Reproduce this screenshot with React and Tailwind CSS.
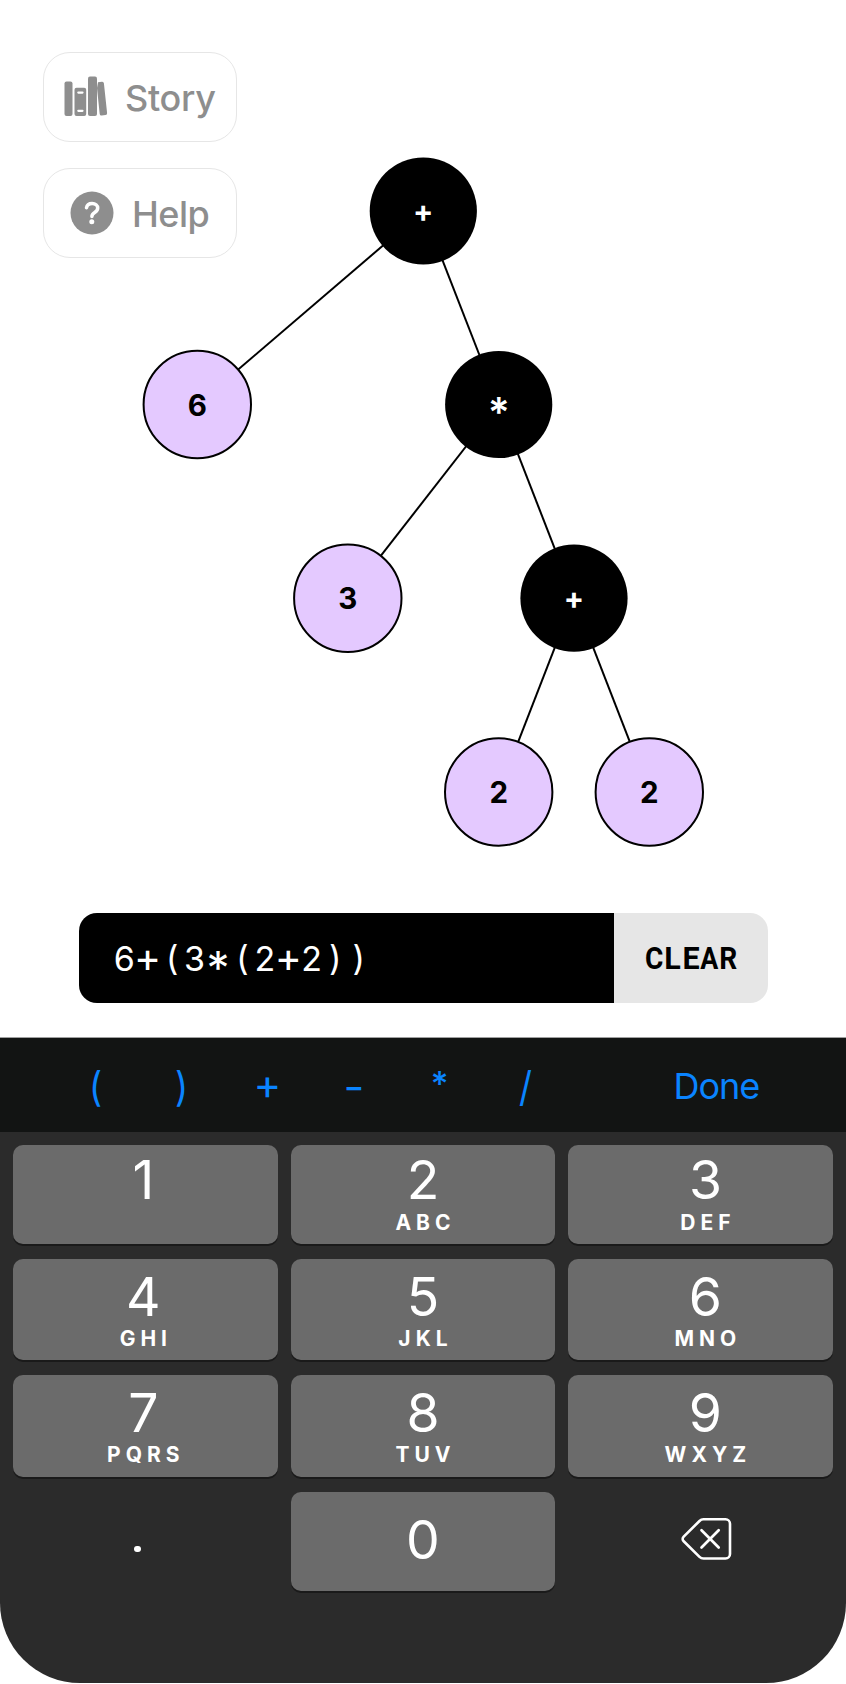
const edges = [
  [423.3, 211, 197.3, 404.5],
  [423.3, 211, 498.7, 404.5],
  [498.7, 404.5, 347.8, 598.2],
  [498.7, 404.5, 574, 598.2],
  [574, 598.2, 498.7, 792],
  [574, 598.2, 649.3, 792],
];

const nodes = [
  { x: 423.3, y: 211, label: "+", op: true, dy: 10.5 },
  { x: 197.3, y: 404.5, label: "6", dy: 11.3 },
  { x: 498.7, y: 404.5, label: "*", op: true, dy: 22.5 },
  { x: 347.8, y: 598.2, label: "3", dy: 11 },
  { x: 574, y: 598.2, label: "+", op: true, dy: 10.5 },
  { x: 498.7, y: 792, label: "2", dy: 10.7 },
  { x: 649.3, y: 792, label: "2", dy: 10.7 },
];

function Tree() {
  return (
    <svg className="absolute left-0 top-0" width="846" height="880" viewBox="0 0 846 880">
      {edges.map(([x1, y1, x2, y2], i) => (
        <line key={i} x1={x1} y1={y1} x2={x2} y2={y2} stroke="#000" strokeWidth="2" />
      ))}
      {nodes.map((n, i) => (
        <g key={i}>
          <circle cx={n.x} cy={n.y} r={n.op ? 53.6 : 53.7} fill={n.op ? "#000" : "#e4c9ff"} stroke="#000" strokeWidth={n.op ? 0 : 2} />
          <text
            x={n.x}
            y={n.y + n.dy}
            textAnchor="middle"
            fontSize={n.label === "*" ? 41 : n.op ? 30 : 29.5}
            fontWeight={n.label === "*" ? 600 : 700}
            fill={n.op ? "#fff" : "#000"}
          >
            {n.label}
          </text>
        </g>
      ))}
    </svg>
  );
}

function BooksIcon() {
  return (
    <svg width="44" height="42" viewBox="0 0 44 42" fill="#8e8e8e">
      <rect x="0.5" y="5.5" width="8" height="34.5" rx="2" />
      <path d="M12.500 11.700h7.700a2 2 0 0 1 2 2V38a2 2 0 0 1-2 2h-7.700a2 2 0 0 1-2-2V13.700a2 2 0 0 1 2-2Z" />
      <rect x="13.200" y="15.500" width="6.400" height="2.200" rx="1.100" fill="#fff" />
      <rect x="13.200" y="33.700" width="6.400" height="2.200" rx="1.100" fill="#fff" />
      <rect x="24" y="0.500" width="9" height="39.500" rx="2" />
      <path d="M34 6.200l3.900-.5a1.800 1.800 0 0 1 2 1.600l3.200 29.700a1.800 1.800 0 0 1-1.600 2l-3.800.5a1.800 1.800 0 0 1-2-1.600L33 12z" />
    </svg>
  );
}

function HelpIcon() {
  return (
    <svg width="44" height="44" viewBox="0 0 44 44" fill="none">
      <circle cx="22" cy="22" r="21.500" fill="#8e8e8e" />
      <path d="M16.500 16.800c.5-2.900 2.600-4.300 5.600-4.300 3.300 0 5.600 1.800 5.600 4.600 0 2.200-1.200 3.300-3 4.400-1.900 1.200-2.800 2-2.800 3.900" stroke="#fff" strokeWidth="3.500" strokeLinecap="round" />
      <circle cx="21.800" cy="30.800" r="2.500" fill="#fff" />
    </svg>
  );
}

function Backspace() {
  return (
    <svg width="52" height="44" viewBox="0 0 52 44" fill="none" stroke="#fff" strokeLinecap="round" strokeLinejoin="round">
      <path strokeWidth="2.600" d="M22.500 2.300H44.500a4.500 4.500 0 0 1 4.500 4.500V37a4.500 4.500 0 0 1-4.500 4.500H22.500c-1.600 0-2.800-.5-4-1.700L2.700 24.200c-1.400-1.400-1.400-3.200 0-4.600L18.500 4c1.200-1.200 2.400-1.700 4-1.700Z" />
      <path strokeWidth="2.700" d="M20.500 13.300l17.200 17.200M37.700 13.300L20.500 30.500" />
    </svg>
  );
}

const shifts = ["pr-[4px]", "pl-[0px]", "pl-[9.500px]"];

function Key({ digit, letters, col, top }) {
  return (
    <div className={`flex flex-col items-center rounded-[10px] bg-[#6b6b6b] text-white shadow-[0_2px_0_#1a1a1a] ${shifts[col]} ${top}`}>
      <span className="text-[53.5px] font-[380] leading-[54px]">{digit}</span>
      {letters && (
        <span className="mt-[3.500px] pl-[5px] text-[21px] font-[650] leading-[24px] tracking-[5px]">{letters}</span>
      )}
    </div>
  );
}

const rows = [
  [["1"], ["2", "ABC"], ["3", "DEF"]],
  [["4", "GHI"], ["5", "JKL"], ["6", "MNO"]],
  [["7", "PQRS"], ["8", "TUV"], ["9", "WXYZ"]],
];

const tops = ["pt-[8px]", "pt-[10.500px]", "pt-[10.500px]"];

const operators = [
  ["(", "scale-y-[1.120]"],
  [")", "scale-y-[1.120]"],
  ["+", "text-[42px] -top-[1.500px]"],
  ["-", "scale-x-[1.250] font-medium top-px"],
  ["*", "text-[34px] font-medium -top-[2px]"],
  ["/", "scale-y-[1.150] top-px"],
];

const formulaGlyphs = {
  "*": "top-[9px] text-[46px]",
  "+": "-top-[2.500px] text-[41px]",
  "(": "left-[1px] -top-px",
  ")": "-top-px",
};

export default function App() {
  return (
    <div className="relative flex h-[1684px] w-[846px] flex-col overflow-hidden bg-white font-['Inter',sans-serif]">
      <Tree />
      <div className="flex h-[913px] flex-col gap-[26px] pl-[43px] pt-[52px]">
        <button className="flex h-[90px] w-[194px] items-center rounded-[27px] border-[1.500px] border-[#e6e6e6] pl-[20px] text-[#8e8e8e]">
          <BooksIcon />
          <span className="ml-[17px] mt-[2px] text-[36px] font-medium leading-[44px] tracking-[-0.300px]">Story</span>
        </button>
        <button className="flex h-[90px] w-[194px] items-center rounded-[27px] border-[1.500px] border-[#e6e6e6] pl-[26px] text-[#8e8e8e]">
          <HelpIcon />
          <span className="ml-[18px] mt-[2px] text-[36px] font-medium leading-[44px] tracking-[-0.500px]">Help</span>
        </button>
      </div>

      <div className="mx-[79px] flex h-[90px] w-[689px] shrink-0 overflow-hidden rounded-[18px]">
        <div className="flex w-[535px] items-center bg-black pl-[33.500px] pt-[2px] text-[34px] leading-[40px] text-white">
          {"6+(3*(2+2))".split("").map((c, i) => (
            <span key={i} className={`relative flex w-[23.450px] justify-center ${formulaGlyphs[c] || ""}`}>{c}</span>
          ))}
        </div>
        <button className="flex flex-1 items-center justify-center bg-[#e6e6e6] pt-px font-['Roboto',sans-serif] text-[30.500px] font-bold leading-[40px] text-black">
          {"CLEAR".split("").map((c, i) => (
            <span key={i} className={`flex w-[18.500px] justify-center ${c === "A" ? "scale-x-[0.880]" : c === "L" || c === "E" ? "" : "scale-x-[0.920]"}`}>{c}</span>
          ))}
        </button>
      </div>

      <div className="mt-[34px] flex h-[646px] shrink-0 flex-col overflow-hidden rounded-b-[80px] border-t border-[#a0a0a0] bg-[#2b2b2b]">
        <div className="flex h-[94px] shrink-0 items-center bg-[#121413] pl-[52.500px] pt-px text-[36px] leading-[44px] text-[#0a84ff]">
          {operators.map(([c, style]) => (
            <span key={c} className={`relative flex w-[86px] justify-center ${style}`}>{c}</span>
          ))}
          <span className="ml-[105px] tracking-[-1px]">Done</span>
        </div>
        <div className="grid grid-cols-3 grid-rows-[99px_101px_101.500px_99px] gap-x-[13px] gap-y-[15px] px-[13px] pt-[13px]">
          {rows.map((row, r) =>
            row.map(([digit, letters], c) => (
              <Key key={digit} digit={digit} letters={letters} col={c} top={tops[r]} />
            ))
          )}
          <div className="flex justify-center pr-[16px] pt-[54px]">
            <span className="size-[6.500px] rounded-full bg-white" />
          </div>
          <Key digit="0" col={1} top="pt-[21.500px]" />
          <div className="flex justify-center pl-[12px] pt-[25px]">
            <Backspace />
          </div>
        </div>
      </div>
    </div>
  );
}
